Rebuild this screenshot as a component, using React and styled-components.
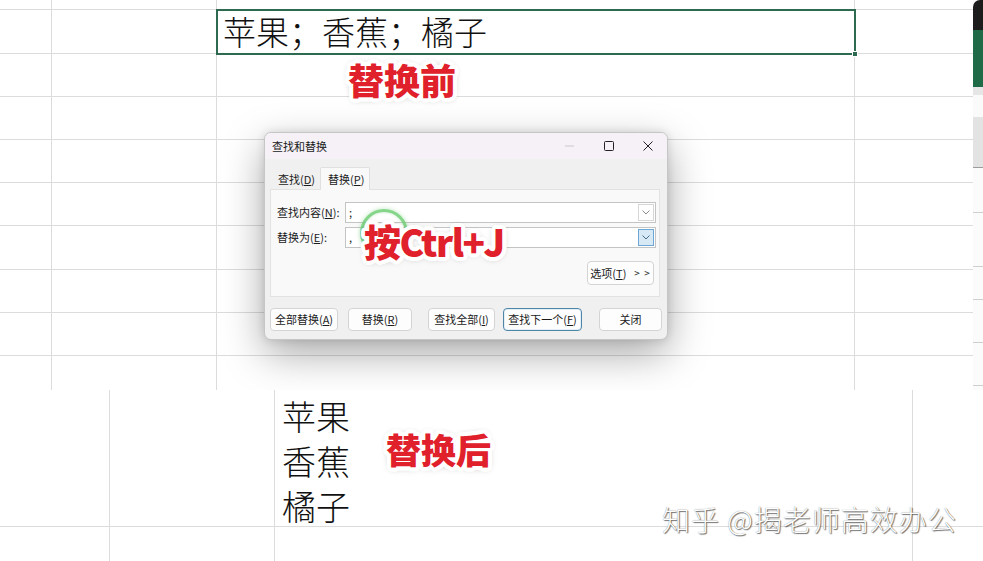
import React from 'react';
import styled, { createGlobalStyle } from 'styled-components';

const CJK = `"Noto Sans CJK SC", "Noto Sans", sans-serif`;

const GlobalStyle = createGlobalStyle`
  html, body { margin: 0; padding: 0; background: #ffffff; }
  body { width: 983px; height: 561px; overflow: hidden; font-family: ${CJK}; }
  * { box-sizing: border-box; }
`;

const ring = (r, color, n = 16) =>
  Array.from({ length: n }, (_, i) => {
    const a = (i * 2 * Math.PI) / n;
    return `${(Math.cos(a) * r).toFixed(2)}px ${(Math.sin(a) * r).toFixed(2)}px 0 ${color}`;
  }).join(', ');

const STICKER_SHADOW = [
  ring(1.5, '#fff', 8),
  ring(3, '#fff', 16),
  ring(4, '#fff', 24),
  '0 0 6px rgba(0,0,0,0.30)',
  '0 1px 8px rgba(0,0,0,0.22)',
].join(', ');

const Page = styled.main`
  width: 983px;
  height: 561px;
  display: flex;
  flex-direction: column;
`;

const TopSheet = styled.section`
  position: relative;
  height: 390px;
  flex-shrink: 0;
  display: flex;
  overflow: hidden;
`;

const BottomSheet = styled.section`
  position: relative;
  height: 171px;
  flex-shrink: 0;
  display: flex;
  overflow: hidden;
`;

const SheetGrid = styled.div`
  flex: 1;
  display: grid;
  grid-template-columns: ${(p) => p.$cols};
  grid-template-rows: ${(p) => p.$rows};
`;

const Cell = styled.div`
  position: relative;
  border-right: ${(p) => (p.$noRight ? 'none' : '1px solid #dcdcdc')};
  border-bottom: ${(p) => (p.$noBottom ? 'none' : '1px solid #dcdcdc')};
  display: flex;
  flex-direction: column;
  justify-content: ${(p) => (p.$top ? 'flex-start' : 'center')};
  padding-top: ${(p) => (p.$top ? 3 : 0)}px;
  ${(p) =>
    p.$selected &&
    `
    outline: 2px solid #2d6a4f;
    outline-offset: -1px;
    z-index: 2;
  `}
`;

const FillHandle = styled.span`
  position: absolute;
  right: -4px;
  bottom: -4px;
  width: 6px;
  height: 6px;
  background: #2d6a4f;
  border: 1px solid #ffffff;
`;

const CellText = styled.div`
  font-family: ${CJK};
  font-size: 33px;
  font-weight: 300;
  color: #111;
  padding-left: 6px;
  line-height: 1;
  white-space: nowrap;
`;

const CellLine = styled.div`
  font-family: ${CJK};
  font-size: 34px;
  font-weight: 300;
  color: #111;
  padding-left: 7px;
  height: 45px;
  line-height: 45px;
  white-space: nowrap;
`;

const SidePanel = styled.aside`
  width: 10px;
  flex-shrink: 0;
  display: flex;
  flex-direction: column;
  background: #fbfbfb;
`;

const PanelBlock = styled.div`
  height: ${(p) => p.$h}px;
  flex-shrink: 0;
  background: ${(p) => p.$bg};
  border-top-left-radius: ${(p) => p.$r || 0}px;
  border-bottom: ${(p) => (p.$edge ? `1px solid ${p.$edge}` : 'none')};
`;

const PanelTick = styled.div`
  height: 1px;
  flex-shrink: 0;
  margin-top: ${(p) => p.$gap}px;
  background: #cfcfcf;
`;

const Sticker = styled.div`
  position: absolute;
  left: ${(p) => p.$x}px;
  top: ${(p) => p.$y}px;
  z-index: 6;
  font-family: ${CJK};
  font-weight: 900;
  font-size: ${(p) => p.$size}px;
  line-height: 1;
  color: #e0202b;
  white-space: nowrap;
  letter-spacing: ${(p) => p.$ls || 0}px;
  text-shadow: ${STICKER_SHADOW};
`;

const ClickRing = styled.div`
  position: absolute;
  left: 360px;
  top: 209px;
  width: 48px;
  height: 48px;
  border-radius: 50%;
  border: 3px solid rgba(112, 206, 118, 0.85);
  box-shadow: 0 0 4px rgba(112, 206, 118, 0.5), inset 0 0 3px rgba(112, 206, 118, 0.4);
  z-index: 5;
`;

const Watermark = styled.div`
  position: absolute;
  left: 662px;
  top: 115px;
  font-family: ${CJK};
  font-size: 28px;
  font-weight: 300;
  letter-spacing: 1px;
  line-height: 1;
  color: #ffffff;
  white-space: nowrap;
  text-shadow: 1px 1px 1px rgba(0, 0, 0, 0.55), 0 0 1px rgba(0, 0, 0, 0.5);
`;

/* ---------- dialog ---------- */

const Dialog = styled.div`
  position: absolute;
  left: 264px;
  top: 132px;
  width: 404px;
  height: 208px;
  z-index: 4;
  background: #f0f0f0;
  border: 1px solid #c6c6c6;
  border-radius: 7px;
  box-shadow: 0 14px 40px rgba(0, 0, 0, 0.34), 0 0 8px rgba(0, 0, 0, 0.12);
  display: flex;
  flex-direction: column;
  overflow: hidden;
  font-family: ${CJK};
  font-size: 11px;
  color: #1b1b1b;
`;

const TitleBar = styled.div`
  height: 26px;
  flex-shrink: 0;
  display: flex;
  align-items: center;
  background: #f5f1f6;
`;

const Title = styled.div`
  flex: 1;
  padding-left: 7px;
  line-height: 1;
`;

const WinButton = styled.div`
  width: 39px;
  height: 100%;
  display: flex;
  align-items: center;
  justify-content: center;
  color: ${(p) => (p.$disabled ? '#c9c9c9' : '#222')};
`;

const DialogBody = styled.div`
  flex: 1;
  display: flex;
  flex-direction: column;
  padding: 8px 7px 0 5px;
`;

const TabStrip = styled.div`
  height: 23px;
  display: flex;
  align-items: flex-end;
  margin-bottom: -1px;
  position: relative;
  z-index: 1;
`;

const Tab = styled.div`
  width: 50px;
  height: ${(p) => (p.$active ? 23 : 22)}px;
  display: flex;
  align-items: center;
  padding-left: 7px;
  padding-bottom: ${(p) => (p.$active ? 0 : 1)}px;
  background: ${(p) => (p.$active ? '#f9f9f9' : 'transparent')};
  border: 1px solid ${(p) => (p.$active ? '#e0e0e0' : 'transparent')};
  border-bottom: none;
  border-radius: 2px 2px 0 0;
  line-height: 1;
`;

const TabPanel = styled.div`
  height: 108px;
  flex-shrink: 0;
  background: #f9f9f9;
  border: 1px solid #e2e2e2;
  padding: 12px 3px 0 6px;
  display: flex;
  flex-direction: column;
`;

const FieldRow = styled.div`
  display: flex;
  align-items: center;
  height: 21px;
  margin-top: ${(p) => p.$mt || 0}px;
`;

const FieldLabel = styled.div`
  width: 68px;
  flex-shrink: 0;
  line-height: 1;
`;

const ComboBox = styled.div`
  flex: 1;
  height: 21px;
  display: flex;
  background: #ffffff;
  border: 1px solid #c4c4c4;
`;

const ComboText = styled.div`
  flex: 1;
  padding-left: 3px;
  display: flex;
  align-items: center;
  font-size: 11px;
  line-height: 1;
`;

const ComboArrow = styled.div`
  width: 16px;
  margin: 1px;
  display: flex;
  align-items: center;
  justify-content: center;
  background: ${(p) => (p.$focused ? '#d8e9f6' : '#ffffff')};
  border: 1px solid ${(p) => (p.$focused ? '#6ea6d6' : '#d6d6d6')};
  color: ${(p) => (p.$focused ? '#4a6e8a' : '#8a8a8a')};
`;

const OptionsRow = styled.div`
  display: flex;
  justify-content: flex-end;
  margin-top: 13px;
  padding-right: 2px;
`;

const Button = styled.div`
  width: ${(p) => p.$w}px;
  height: ${(p) => p.$h || 23}px;
  margin-left: ${(p) => p.$ml || 0}px;
  flex-shrink: 0;
  display: flex;
  align-items: center;
  justify-content: center;
  gap: ${(p) => p.$gap || 0}px;
  background: #fdfdfd;
  border: 1px solid ${(p) => (p.$focused ? '#4f86a8' : '#d4d4d4')};
  box-shadow: ${(p) => (p.$focused ? 'inset 0 0 0 1px #e3eef5' : 'none')};
  border-radius: 4px;
  font-size: 11px;
  line-height: 1;
  white-space: nowrap;
`;

const ButtonRow = styled.div`
  display: flex;
  margin-top: 11px;
`;

const Key = styled.u`
  text-decoration: underline;
  text-underline-offset: 1px;
`;

const Chevrons = styled.span`
  letter-spacing: 1px;
  font-size: 10px;
`;

const Chevron = () => (
  <svg width="8" height="5" viewBox="0 0 8 5">
    <polyline points="0.5,0.5 4,4 7.5,0.5" fill="none" stroke="currentColor" strokeWidth="1" />
  </svg>
);

const Mn = ({ label, k }) => (
  <span>
    {label}(<Key>{k}</Key>)
  </span>
);

const TOP_COLS = '52px 165px 638px 118px';
const TOP_ROWS = [10, 44, 43, 43, 43, 43, 44, 43, 43, 34];
const BOTTOM_COLS = '110px 165px 638px 70px';
const BOTTOM_ROWS = [137, 34];
const FRUITS = ['苹果', '香蕉', '橘子'];

export default function App() {
  return (
    <>
      <GlobalStyle />
      <Page>
        <TopSheet>
          <SheetGrid $cols={TOP_COLS} $rows={TOP_ROWS.map((h) => `${h}px`).join(' ')}>
            {TOP_ROWS.map((_, r) =>
              [0, 1, 2, 3].map((c) => {
                const selected = r === 1 && c === 2;
                return (
                  <Cell
                    key={`t${r}-${c}`}
                    $noRight={c === 3}
                    $noBottom={r === TOP_ROWS.length - 1}
                    $selected={selected}
                  >
                    {selected && (
                      <>
                        <CellText>苹果；香蕉；橘子</CellText>
                        <FillHandle />
                      </>
                    )}
                  </Cell>
                );
              })
            )}
          </SheetGrid>
          <SidePanel>
            <PanelBlock $h={30} $bg="#1c1c1c" $r={7} />
            <PanelBlock $h={57} $bg="#1f6b48" />
            <PanelBlock $h={8} $bg="#e6e6e6" />
            <PanelBlock $h={22} $bg="#fafafa" />
            <PanelBlock $h={51} $bg="#e3e3e3" $edge="#9c9c9c" />
            <PanelTick $gap={44} />
            <PanelTick $gap={53} />
            <PanelTick $gap={32} />
            <PanelTick $gap={42} />
            <PanelTick $gap={42} />
          </SidePanel>

          <Sticker $x={348} $y={61} $size={36}>替换前</Sticker>

          <Dialog>
            <TitleBar>
              <Title>查找和替换</Title>
              <WinButton $disabled>
                <svg width="10" height="2" viewBox="0 0 10 2">
                  <line x1="0" y1="1" x2="9" y2="1" stroke="currentColor" strokeWidth="1" />
                </svg>
              </WinButton>
              <WinButton>
                <svg width="10" height="10" viewBox="0 0 10 10">
                  <rect x="0.5" y="0.5" width="9" height="9" rx="1" fill="none" stroke="currentColor" strokeWidth="1" />
                </svg>
              </WinButton>
              <WinButton>
                <svg width="10" height="10" viewBox="0 0 10 10">
                  <path d="M0.5 0.5 L9.5 9.5 M9.5 0.5 L0.5 9.5" fill="none" stroke="currentColor" strokeWidth="1" />
                </svg>
              </WinButton>
            </TitleBar>
            <DialogBody>
              <TabStrip>
                <Tab>
                  <Mn label="查找" k="D" />
                </Tab>
                <Tab $active>
                  <Mn label="替换" k="P" />
                </Tab>
              </TabStrip>
              <TabPanel>
                <FieldRow>
                  <FieldLabel>
                    <Mn label="查找内容" k="N" />:
                  </FieldLabel>
                  <ComboBox>
                    <ComboText>;</ComboText>
                    <ComboArrow>
                      <Chevron />
                    </ComboArrow>
                  </ComboBox>
                </FieldRow>
                <FieldRow $mt={4}>
                  <FieldLabel>
                    <Mn label="替换为" k="E" />:
                  </FieldLabel>
                  <ComboBox>
                    <ComboText>,</ComboText>
                    <ComboArrow $focused>
                      <Chevron />
                    </ComboArrow>
                  </ComboBox>
                </FieldRow>
                <OptionsRow>
                  <Button $w={67} $h={24} $gap={8}>
                    <Mn label="选项" k="T" />
                    <Chevrons>&gt; &gt;</Chevrons>
                  </Button>
                </OptionsRow>
              </TabPanel>
              <ButtonRow>
                <Button $w={68}>
                  <Mn label="全部替换" k="A" />
                </Button>
                <Button $w={64} $ml={10}>
                  <Mn label="替换" k="R" />
                </Button>
                <Button $w={67} $ml={16}>
                  <Mn label="查找全部" k="I" />
                </Button>
                <Button $w={79} $ml={8} $focused>
                  <Mn label="查找下一个" k="F" />
                </Button>
                <Button $w={63} $ml={17}>
                  关闭
                </Button>
              </ButtonRow>
            </DialogBody>
          </Dialog>

          <ClickRing />
          <Sticker $x={364} $y={223} $size={37} $ls={-1.5}>按Ctrl+J</Sticker>
        </TopSheet>

        <BottomSheet>
          <SheetGrid $cols={BOTTOM_COLS} $rows={BOTTOM_ROWS.map((h) => `${h}px`).join(' ')}>
            {BOTTOM_ROWS.map((_, r) =>
              [0, 1, 2, 3].map((c) => (
                <Cell
                  key={`b${r}-${c}`}
                  $noRight={c === 3}
                  $noBottom={r === BOTTOM_ROWS.length - 1}
                  $top
                >
                  {r === 0 && c === 2 && FRUITS.map((f) => <CellLine key={f}>{f}</CellLine>)}
                </Cell>
              ))
            )}
          </SheetGrid>
          <Sticker $x={386} $y={41} $size={35}>替换后</Sticker>
          <Watermark>知乎 @揭老师高效办公</Watermark>
        </BottomSheet>
      </Page>
    </>
  );
}
